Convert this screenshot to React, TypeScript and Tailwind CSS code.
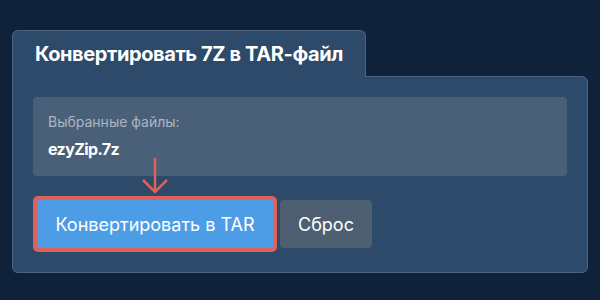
import React from "react";

export default function App() {
  return (
    <div
      className="w-[600px] h-[300px] bg-[#10223a] pt-[30px] px-[12px]"
      style={{ fontFamily: "Inter, 'Noto Sans', sans-serif" }}
    >
      <div className="flex flex-col">
        <div className="relative z-10 -mb-px w-fit h-[47px] rounded-t-[6px] border border-b-0 border-[#4b6484] bg-[#2d4a6a] px-[22px] flex items-center">
          <h1 className="text-[20px] font-bold tracking-[-0.4px] text-white leading-none">
            Конвертировать 7Z в TAR-файл
          </h1>
        </div>
        <div className="h-[197px] rounded-b-[6px] rounded-tr-[6px] border border-[#4b6484] bg-[#2d4a6a] p-5 flex flex-col">
          <div className="rounded-[4px] bg-[#4a6078] px-[15px] pt-[15px] pb-[15px]">
            <div className="text-[14px] leading-[20px] text-[#aab6c4]">Выбранные файлы:</div>
            <div className="mt-[5px] text-[16px] leading-[24px] font-bold tracking-[-0.6px] text-white">ezyZip.7z</div>
          </div>
          <div className="mt-5 flex items-center gap-[3px]">
            <div className="relative">
              <svg
                className="absolute left-1/2 -translate-x-1/2 -top-[40px]"
                width="30"
                height="38"
                viewBox="0 0 30 38"
                fill="none"
                stroke="#e0605a"
                strokeWidth="2.5"
              >
                <line x1="15" y1="2" x2="15" y2="36" />
                <polyline points="3,24 15,36 27,24" />
              </svg>
              <button className="h-[56px] w-[244px] rounded-[5px] border-4 border-[#e0605a] bg-[#4d9de6] text-[18px] text-white">
                Конвертировать в TAR
              </button>
            </div>
            <button className="h-[48px] w-[92px] rounded-[4px] bg-[#4d5f70] text-[18px] text-white">
              Сброс
            </button>
          </div>
        </div>
      </div>
    </div>
  );
}
